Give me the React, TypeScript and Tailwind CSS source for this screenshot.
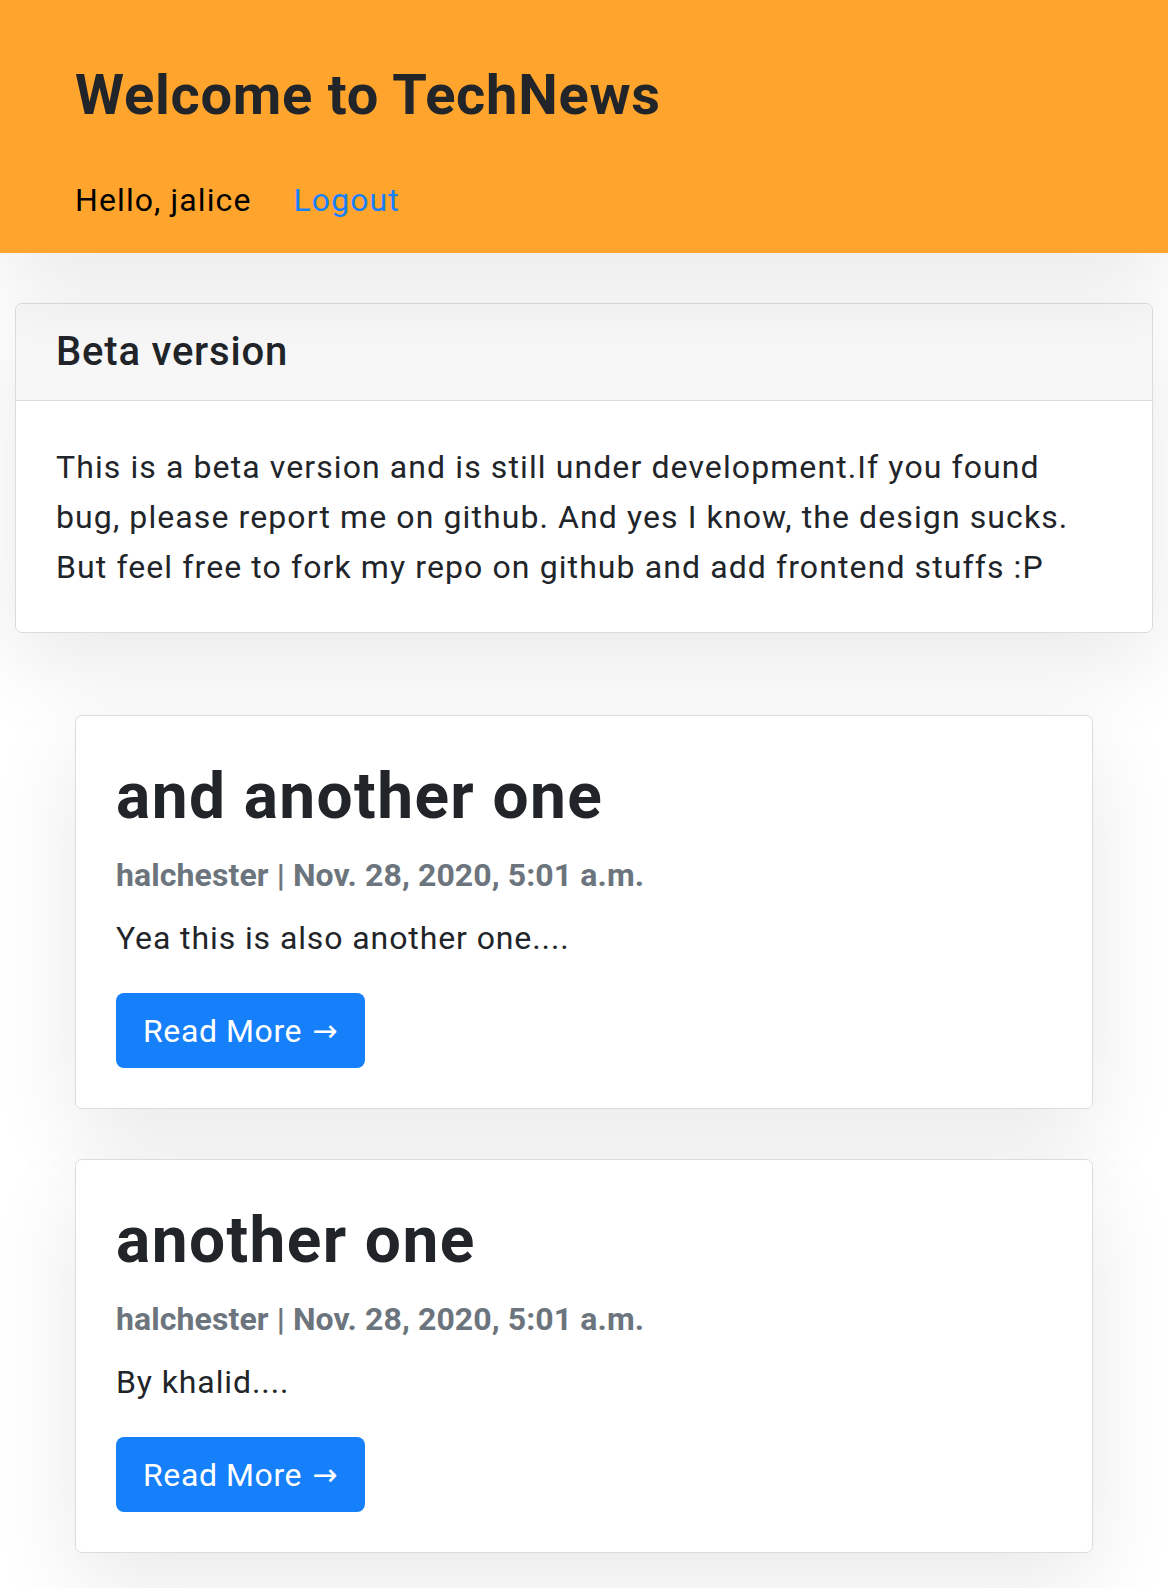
import React from "react";

const posts = [
  {
    title: "and another one",
    author: "halchester",
    date: "Nov. 28, 2020, 5:01 a.m.",
    excerpt: "Yea this is also another one....",
  },
  {
    title: "another one",
    author: "halchester",
    date: "Nov. 28, 2020, 5:01 a.m.",
    excerpt: "By khalid....",
  },
];

const PostCard = ({ post }: { post: (typeof posts)[number] }) => (
  <div className="rounded-[7px] border border-[#dcdcdc] bg-white px-[40px] pb-[40px] pt-[42px] shadow-[0_30px_90px_rgba(0,0,0,0.09)]">
    <h2 className="text-[64px] font-bold leading-[77px] tracking-[1.4px] text-[#212529]">{post.title}</h2>
    <p className="mt-[21px] text-[32px] font-bold leading-[38px] tracking-[0.1px] text-[#6c757d]">
      {post.author} | {post.date}
    </p>
    <p className="mt-[20px] text-[32px] leading-[48px] tracking-[0.9px] text-[#212529]">{post.excerpt}</p>
    <button className="mt-[31px] flex h-[75px] items-center rounded-[8px] bg-[#1680fb] px-[27px] text-[32px] leading-[48px] tracking-[0.6px] text-white">
      Read More <span className="ml-[10px] font-['DejaVu_Sans',sans-serif] text-[30px]">→</span>
    </button>
  </div>
);

export default function App() {
  return (
    <div className="min-h-[1588px] bg-white font-['Roboto',sans-serif] text-[#212529]">
      {/* Header */}
      <header className="relative z-10 h-[253px] bg-[#ffa42d] px-[75px] pt-[62px] shadow-[0_30px_90px_rgba(0,0,0,0.09)]">
        <h1 className="text-[56px] font-bold leading-[67px] tracking-[0.75px] text-[#212529]">Welcome to TechNews</h1>
        <div className="mt-[47px] flex items-center gap-[42px] text-[32px] leading-[48px] tracking-[1.1px]">
          <span className="text-black">Hello, jalice</span>
          <a href="#" className="text-[#1680fb]">
            Logout
          </a>
        </div>
      </header>

      {/* Beta notice */}
      <div className="mx-[15px] mt-[50px] overflow-hidden rounded-[7px] border border-[#dcdcdc] bg-white shadow-[0_30px_90px_rgba(0,0,0,0.09)]">
        <div className="h-[97px] border-b border-[#dcdcdc] bg-[#f7f7f7] px-[40px] pt-[24px]">
          <h5 className="text-[40px] font-medium leading-[48px] tracking-[0.8px]">Beta version</h5>
        </div>
        <div className="px-[40px] pb-[40px] pt-[41px] text-[32px] leading-[50px] tracking-[1.1px]">
          This is a beta version and is still under development.If you found
          <br />
          bug, please report me on github. And yes I know, the design sucks.
          <br />
          But feel free to fork my repo on github and add frontend stuffs :P
        </div>
      </div>

      {/* Posts */}
      <div className="mx-[75px] mt-[82px] flex flex-col gap-[50px] pb-[35px]">
        {posts.map((post, i) => (
          <PostCard key={i} post={post} />
        ))}
      </div>
    </div>
  );
}
